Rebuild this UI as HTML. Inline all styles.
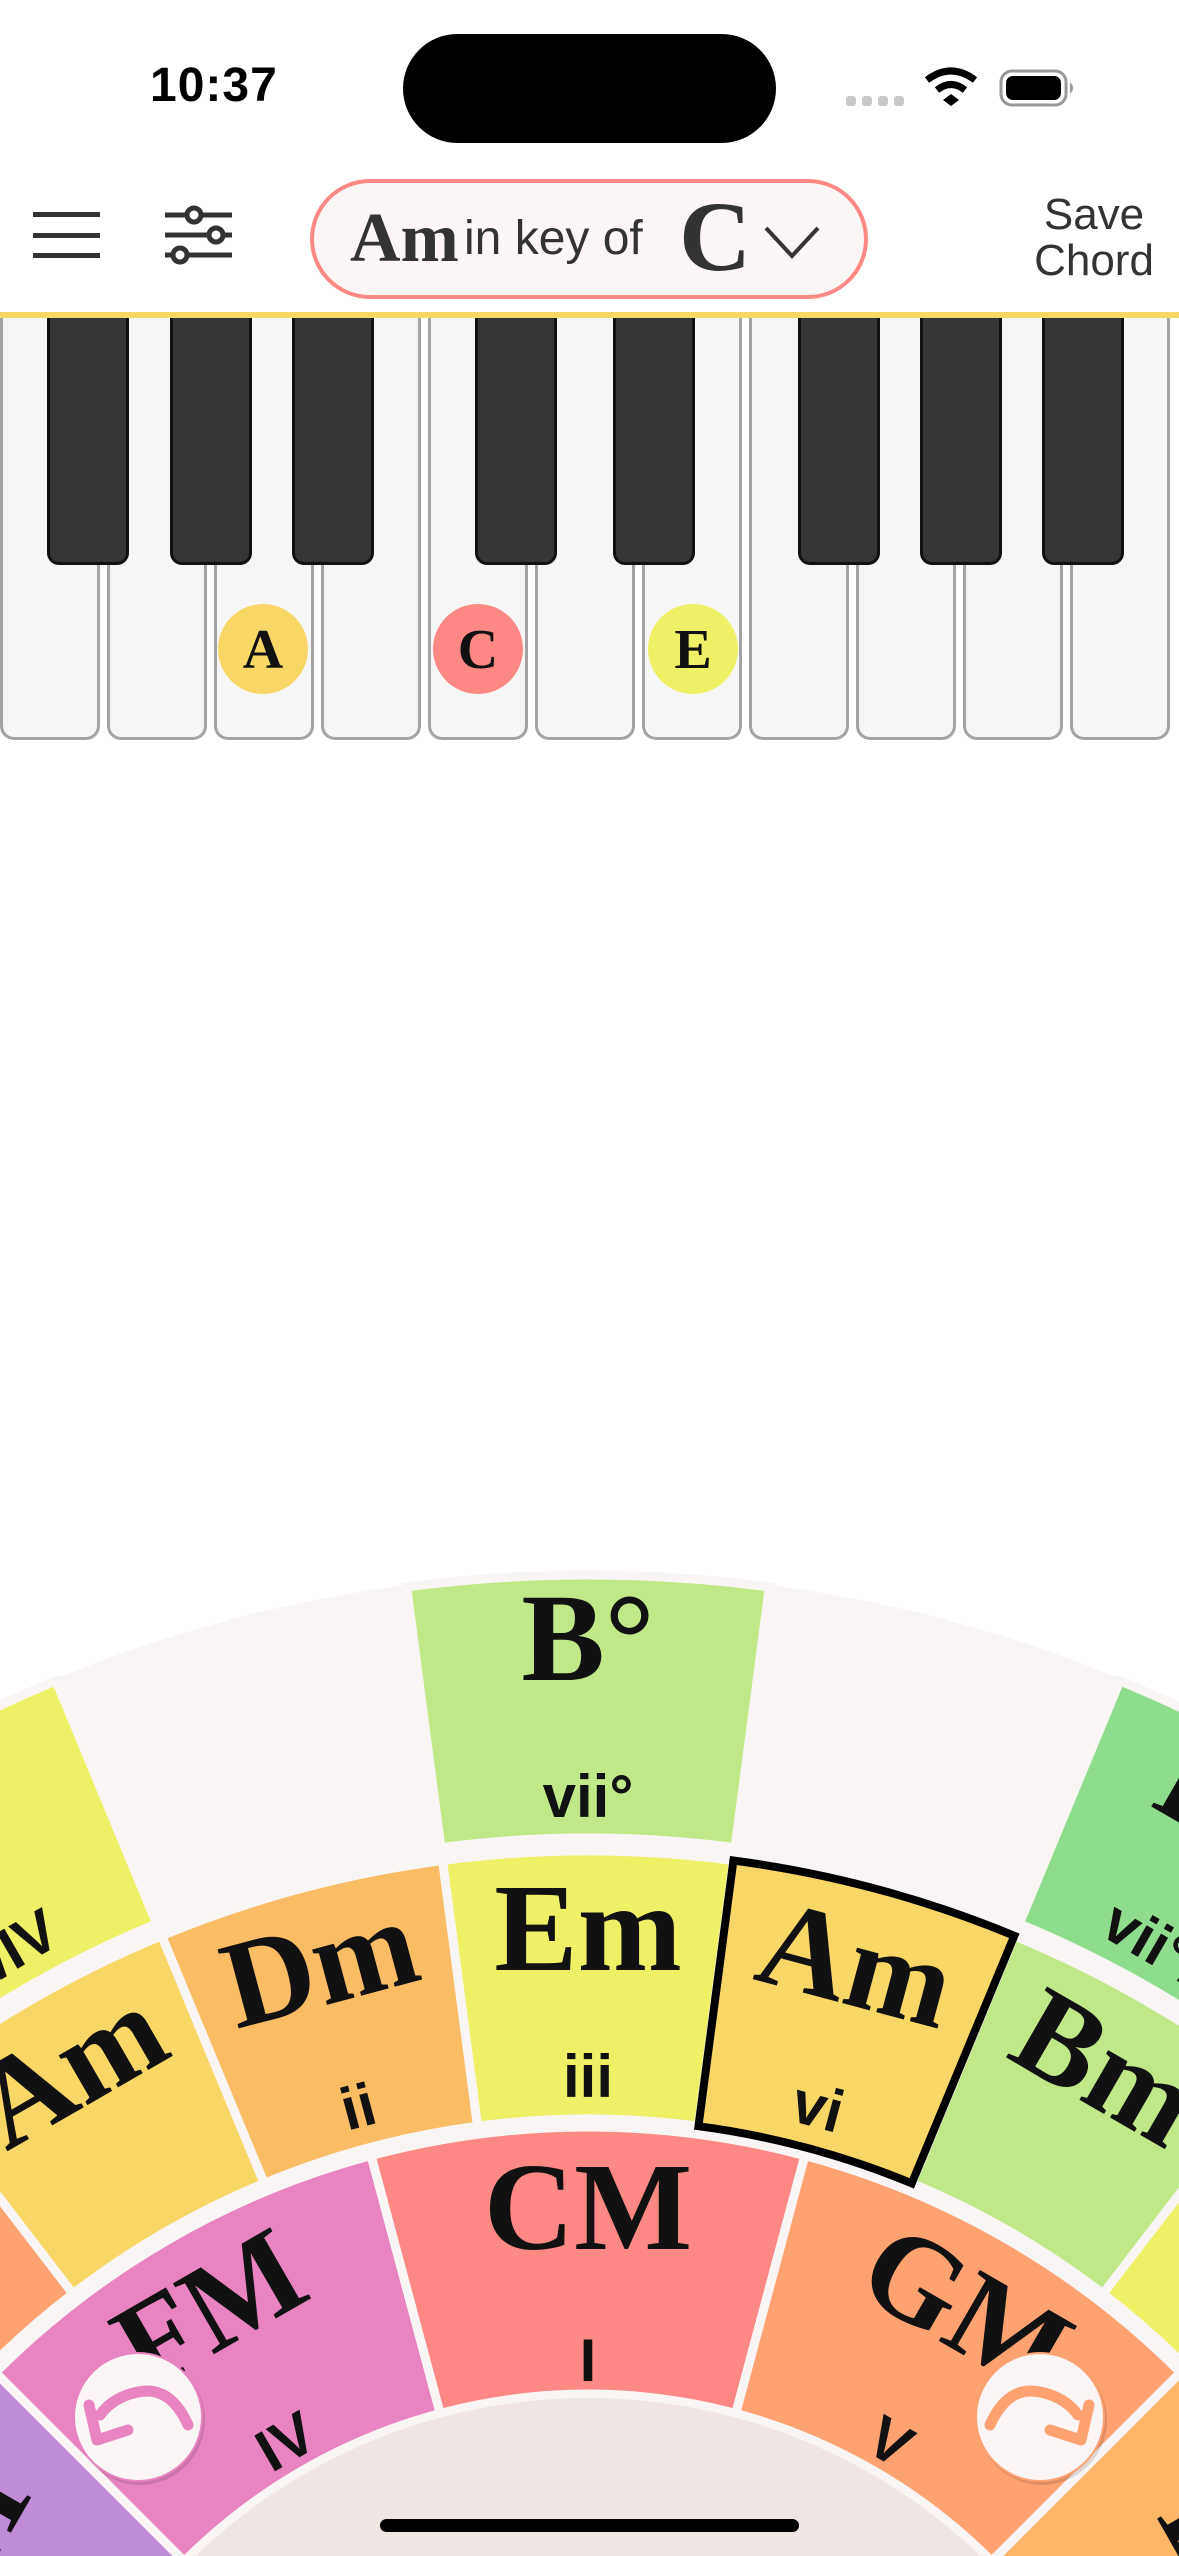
<!DOCTYPE html>
<html><head><meta charset="utf-8">
<style>
html,body{margin:0;padding:0;background:#fff;width:1179px;height:2556px;overflow:hidden;position:relative;font-family:"Liberation Sans",sans-serif;}
.abs{position:absolute;}
.wk{position:absolute;top:318px;height:422px;width:100px;background:#f6f6f6;border:3px solid #a3a3a3;border-top:none;border-radius:0 0 14px 14px;box-sizing:border-box;}
.bk{position:absolute;top:318px;height:247px;width:82px;background:#363636;border:3px solid #111;border-top:none;border-radius:0 0 12px 12px;box-sizing:border-box;}
.note{position:absolute;width:90px;height:90px;border-radius:50%;top:604px;font-family:"Liberation Serif",serif;font-weight:bold;font-size:56px;text-align:center;line-height:92px;color:#111;}
</style></head><body>
<div class="abs" style="left:150px;top:58px;font-size:48px;font-weight:bold;color:#000;letter-spacing:1px;">10:37</div>
<div class="abs" style="left:403px;top:34px;width:373px;height:109px;border-radius:55px;background:#000;"></div>
<svg class="abs" style="left:820px;top:50px" width="300" height="90">
 <g fill="#c8c8c8"><rect x="26" y="46" width="10" height="10" rx="3"/><rect x="42" y="46" width="10" height="10" rx="3"/><rect x="58" y="46" width="10" height="10" rx="3"/><rect x="74" y="46" width="10" height="10" rx="3"/></g>
 <path d="M107 30 Q131 12 155 30" stroke="#000" stroke-width="7" fill="none"/>
 <path d="M117 40 Q131 29 145 40" stroke="#000" stroke-width="7" fill="none"/>
 <path d="M123 50 L131 44 L139 50 L131 56 Z" fill="#000"/>
 <rect x="181" y="21" width="65" height="34" rx="11" fill="none" stroke="#999" stroke-width="3"/>
 <rect x="186" y="26" width="55" height="24" rx="7" fill="#000"/>
 <path d="M250 32 Q256 38 250 44 Z" fill="#999"/>
</svg>
<svg class="abs" style="left:0;top:190px" width="260" height="100">
 <g fill="#333"><rect x="33" y="22" width="67" height="5"/><rect x="33" y="43" width="67" height="5"/><rect x="33" y="63" width="67" height="5"/></g>
 <g stroke="#333" stroke-width="5"><line x1="165" y1="25" x2="232" y2="25"/><line x1="165" y1="45" x2="232" y2="45"/><line x1="165" y1="65" x2="232" y2="65"/></g>
 <g fill="#fff" stroke="#333" stroke-width="5"><circle cx="194" cy="25" r="7"/><circle cx="216" cy="45" r="7"/><circle cx="180" cy="65" r="7"/></g>
</svg>
<div class="abs" style="left:310px;top:179px;width:558px;height:120px;box-sizing:border-box;border:4px solid #fe8884;border-radius:60px;background:#fcf6f6;"></div>
<div class="abs" style="left:350px;top:204px;font-family:'Liberation Serif',serif;font-weight:bold;font-size:70px;line-height:1;color:#333;">Am</div>
<div class="abs" style="left:464px;top:215px;font-size:48px;line-height:1;color:#333;">in key of</div>
<div class="abs" style="left:679px;top:187px;font-family:'Liberation Serif',serif;font-weight:bold;font-size:100px;line-height:1;color:#333;">C</div>
<svg class="abs" style="left:760px;top:222px" width="64" height="44"><path d="M6 6 L32 34 L58 6" stroke="#333" stroke-width="4" fill="none"/></svg>
<div class="abs" style="left:1012px;top:192px;width:164px;text-align:center;font-size:44px;line-height:46px;color:#333;">Save<br>Chord</div>
<div class="abs" style="left:0;top:312px;width:1179px;height:6px;background:#f8d766;"></div>
<div class="wk" style="left:0"></div><div class="wk" style="left:107px"></div><div class="wk" style="left:214px"></div><div class="wk" style="left:321px"></div><div class="wk" style="left:428px"></div><div class="wk" style="left:535px"></div><div class="wk" style="left:642px"></div><div class="wk" style="left:749px"></div><div class="wk" style="left:856px"></div><div class="wk" style="left:963px"></div><div class="wk" style="left:1070px"></div>
<div class="bk" style="left:47px"></div><div class="bk" style="left:170px"></div><div class="bk" style="left:292px"></div><div class="bk" style="left:475px"></div><div class="bk" style="left:613px"></div><div class="bk" style="left:798px"></div><div class="bk" style="left:920px"></div><div class="bk" style="left:1042px"></div>
<div class="note" style="left:218px;background:#f8d766;">A</div>
<div class="note" style="left:433px;background:#fe8884;">C</div>
<div class="note" style="left:648px;background:#eef066;">E</div>
<svg class="abs" style="left:0;top:0" width="1179" height="2556">
 <defs>
  <path id="r1" d="M371.1 2155.6 A838 838 0 0 1 804.9 2155.6 L735.8 2413.5 A571 571 0 0 0 440.2 2413.5 Z"/>
  <path id="r2" d="M442.6 1860.5 A1114 1114 0 0 1 733.4 1860.5 L698.4 2126.2 A846 846 0 0 0 477.6 2126.2 Z"/>
  <path id="r3" d="M406.6 1586.9 A1390 1390 0 0 1 769.4 1586.9 L735.1 1847.6 A1127 1127 0 0 0 440.9 1847.6 Z"/>
 </defs>
 <circle cx="588" cy="2965" r="1392" fill="#faf5f5"/>
 <g stroke="#faf5f5" stroke-width="9">
  <use href="#r1" fill="#c08cda" transform="rotate(-60 588 2965)"/>
  <use href="#r1" fill="#e884c0" transform="rotate(-30 588 2965)"/>
  <use href="#r1" fill="#fe8884"/>
  <use href="#r1" fill="#fea272" transform="rotate(30 588 2965)"/>
  <use href="#r1" fill="#fdb766" transform="rotate(60 588 2965)"/>
  <use href="#r2" fill="#fea272" transform="rotate(-45 588 2965)"/>
  <use href="#r2" fill="#f8d766" transform="rotate(-30 588 2965)"/>
  <use href="#r2" fill="#fbbc66" transform="rotate(-15 588 2965)"/>
  <use href="#r2" fill="#eef066"/>
  <use href="#r2" fill="#c0e888" transform="rotate(30 588 2965)"/>
  <use href="#r2" fill="#eef066" transform="rotate(45 588 2965)"/>
  <use href="#r3" fill="#eef066" transform="rotate(-30 588 2965)"/>
  <use href="#r3" fill="#c0e888"/>
  <use href="#r3" fill="#8edd8c" transform="rotate(30 588 2965)"/>
 </g>
 <use href="#r2" fill="#f8d766" stroke="#000" stroke-width="8" transform="rotate(15 588 2965)"/>
 <circle cx="588" cy="2965" r="567" fill="#efe6e4"/>
 <g font-family="Liberation Serif, serif" font-weight="bold" font-size="125" text-anchor="middle" fill="#111">
  <text x="588" y="2249" transform="rotate(-60 588 2965)">B♭M</text>
  <text x="588" y="2249" transform="rotate(-30 588 2965)">FM</text>
  <text x="588" y="2249">CM</text>
  <text x="588" y="2249" transform="rotate(30 588 2965)">GM</text>
  <text x="588" y="2249" transform="rotate(60 588 2965)">DM</text>
  <text x="588" y="1970" transform="rotate(-30 588 2965)">Am</text>
  <text x="588" y="1970" transform="rotate(-15 588 2965)">Dm</text>
  <text x="588" y="1970">Em</text>
  <text x="588" y="1970" transform="rotate(15 588 2965)">Am</text>
  <text x="588" y="1970" transform="rotate(30 588 2965)">Bm</text>
  <text x="588" y="1680">B°</text>
  <text x="588" y="1680" transform="rotate(30 588 2965)">F♯°</text>
  <text x="588" y="1680" transform="rotate(-30 588 2965)">C</text>
 </g>
 <g font-family="Liberation Sans, sans-serif" font-weight="bold" font-size="60" text-anchor="middle" fill="#111">
  <text x="588" y="2381" transform="rotate(-30 588 2965)">IV</text>
  <text x="588" y="2381">I</text>
  <text x="588" y="2381" transform="rotate(30 588 2965)">V</text>
  <text x="588" y="2097" transform="rotate(-15 588 2965)">ii</text>
  <text x="588" y="2097">iii</text>
  <text x="588" y="2097" transform="rotate(15 588 2965)">vi</text>
  <text x="588" y="1817">vii°</text>
  <text x="588" y="1817" transform="rotate(-30 588 2965)">V/IV</text>
  <text x="588" y="1817" transform="rotate(30 588 2965)">vii°/V</text>
 </g>
 <circle cx="140" cy="2420" r="65" fill="#000" opacity="0.12"/>
 <circle cx="1042" cy="2420" r="65" fill="#000" opacity="0.12"/>
 <circle cx="138" cy="2417" r="64" fill="#fbf5f6" stroke="#e884c0" stroke-width="2"/>
 <circle cx="1040" cy="2417" r="64" fill="#fbf5f6" stroke="#fea272" stroke-width="2"/>
 <g fill="none" stroke="#e884c0" stroke-width="11" stroke-linecap="round" stroke-linejoin="round">
  <path d="M188 2425 Q170 2385 138 2392 Q113 2397 100 2415"/>
  <path d="M89 2405 L97 2440 L128 2430"/>
 </g>
 <g fill="none" stroke="#fea272" stroke-width="11" stroke-linecap="round" stroke-linejoin="round">
  <path d="M990 2425 Q1008 2385 1040 2392 Q1065 2397 1078 2415"/>
  <path d="M1089 2405 L1081 2440 L1050 2430"/>
 </g>
 <rect x="380" y="2519" width="419" height="13" rx="6.5" fill="#000"/>
</svg>
</body></html>
